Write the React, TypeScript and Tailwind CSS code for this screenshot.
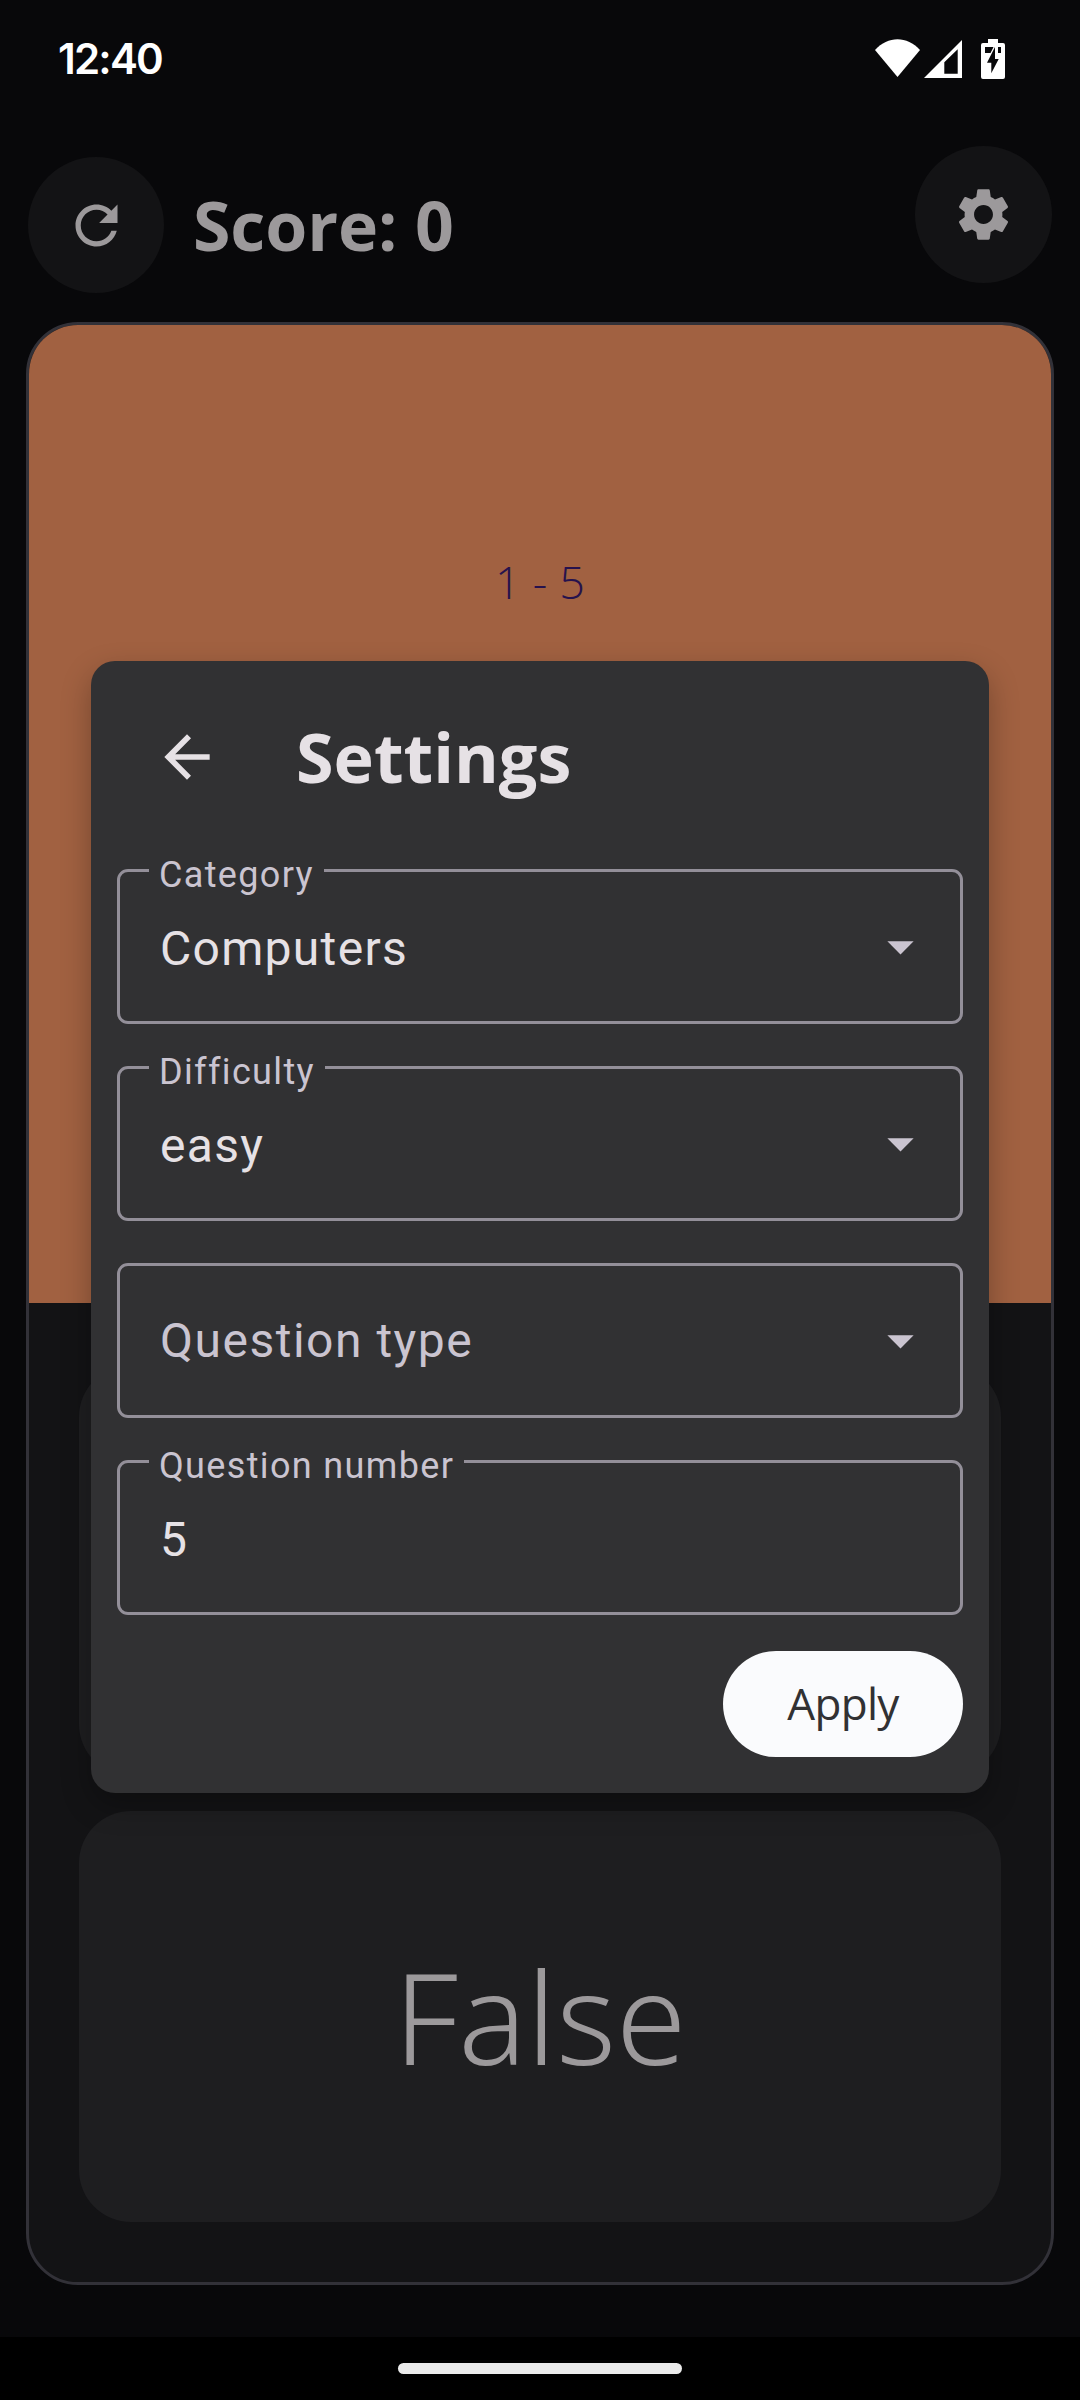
import React from "react";

type FieldProps = {
  label: string;
  value?: string;
  dropdown?: boolean;
};

function Caret() {
  return (
    <svg viewBox="0 0 24 24" className="size-[63px]" fill="#cac4d0">
      <path d="M7 10l5 5 5-5z" />
    </svg>
  );
}

function Field({ label, value, dropdown }: FieldProps) {
  return (
    <div className="relative flex h-[155px] items-center justify-between rounded-[11px] border-[3px] border-[#938f99] pr-[28px] pl-[40px] font-['Roboto',sans-serif]">
      {value ? (
        <>
          <span className="absolute top-[-22px] left-[29px] h-[40px] bg-[#313133] px-[10px] text-[36px] leading-[50px] tracking-[1.35px] whitespace-nowrap text-[#cac4d0]">
            {label}
          </span>
          <span className="pt-[4px] text-[48px] leading-[63px] tracking-[1.3px] text-[#e6e1e5]">{value}</span>
        </>
      ) : (
        <span className="text-[48px] leading-[63px] tracking-[1.5px] text-[#cac4d0]">{label}</span>
      )}
      {dropdown && <Caret />}
    </div>
  );
}

function StatusBar() {
  return (
    <div className="flex h-[118px] items-center justify-between pr-[75px] pl-[58px]">
      <span className="font-['Inter',sans-serif] text-[42px] leading-[50px] font-semibold tracking-[-1.8px] text-white">12:40</span>
      <svg viewBox="0 0 130 40" className="h-[40px] w-[130px]" fill="#fff">
        <path d="M0 11C13-3.300 32-3.300 45 11L22.500 38z" />
        <path fillRule="evenodd" d="M49 39L87 1V39zM69.300 23.300V34.700H82.700V10.300z" />
        <path
          fillRule="evenodd"
          d="M113 0h10v4h5a2 2 0 0 1 2 2v32a2 2 0 0 1-2 2h-20a2 2 0 0 1-2-2V6a2 2 0 0 1 2-2h5zM110 8v6h5.500l3-6zM120 8l-8 15.700h4.300v10.600l7.400-14.300H120zM123 8v6h3V8z"
        />
      </svg>
    </div>
  );
}

function SettingsDialog() {
  return (
    <section className="flex h-[1132px] w-[898px] flex-col rounded-[24px] bg-[#313133] px-[26px] shadow-[0_12px_30px_rgba(0,0,0,0.28)]">
      <header className="flex h-[208px] items-start pt-[62px] pl-[36px]">
        <svg viewBox="0 0 24 24" className="size-[68px]" fill="#e6e1e5">
          <path d="M20 11H7.830l5.590-5.590L12 4l-8 8 8 8 1.410-1.410L7.830 13H20v-2z" />
        </svg>
        <h2 className="ml-[75px] text-[68.25px] leading-[68px] font-bold text-[#e6e1e5]">Settings</h2>
      </header>
      <div className="flex flex-col gap-[42px]">
        <Field label="Category" value="Computers" dropdown />
        <Field label="Difficulty" value="easy" dropdown />
        <Field label="Question type" dropdown />
        <Field label="Question number" value="5" />
      </div>
      <button className="mt-[36px] h-[106px] w-[240px] self-end rounded-full bg-[#fafbfd] pb-[2px] text-[44px] tracking-[-0.7px] text-[#313133]">
        Apply
      </button>
    </section>
  );
}

export default function App() {
  return (
    <div className="relative flex h-[2400px] w-[1080px] flex-col overflow-hidden bg-[#08080a] font-['Open_Sans',sans-serif]">
      <StatusBar />
      <header className="flex h-[204px] items-start justify-between px-[28px] pt-[28px]">
        <div className="mt-[11px] flex items-center">
          <button className="flex size-[136px] items-center justify-center rounded-full bg-[#131315]">
            <svg viewBox="0 0 24 24" className="size-[63px]" fill="#9c999b">
              <path d="M17.650 6.350C16.200 4.900 14.210 4 12 4c-4.420 0-7.990 3.580-7.990 8s3.570 8 7.990 8c3.730 0 6.840-2.550 7.730-6h-2.080c-.82 2.330-3.040 4-5.650 4-3.310 0-6-2.690-6-6s2.690-6 6-6c1.660 0 3.140.69 4.220 1.780L13 11h7V4l-2.350 2.350z" />
            </svg>
          </button>
          <h1 className="ml-[29px] text-[68px] leading-[80px] font-bold tracking-[-0.1px] text-[#9c999b]">Score: 0</h1>
        </div>
        <button className="flex size-[137px] items-center justify-center rounded-full bg-[#131315]">
          <svg viewBox="0 0 24 24" className="size-[63px]" fill="#9c999b">
            <path d="M19.140 12.940c.04-.3.06-.61.06-.94 0-.32-.02-.64-.07-.94l2.030-1.580c.18-.14.23-.41.12-.61l-1.920-3.320c-.12-.22-.37-.29-.59-.22l-2.390.96c-.5-.38-1.030-.7-1.620-.94l-.36-2.540c-.04-.24-.24-.41-.48-.41h-3.840c-.24 0-.43.17-.47.41l-.36 2.540c-.59.24-1.130.57-1.620.94l-2.390-.96c-.22-.08-.47 0-.59.22L2.740 8.870c-.12.21-.08.47.12.61l2.030 1.580c-.05.3-.09.63-.09.94s.02.64.07.94l-2.030 1.580c-.18.14-.23.41-.12.61l1.920 3.320c.12.22.37.29.59.22l2.390-.96c.5.38 1.030.7 1.620.94l.36 2.540c.05.24.24.41.48.41h3.840c.24 0 .44-.17.47-.41l.36-2.540c.59-.24 1.130-.56 1.620-.94l2.390.96c.22.08.47 0 .59-.22l1.920-3.320c.12-.22.07-.47-.12-.61l-2.010-1.580zM12 15.600c-1.980 0-3.600-1.620-3.600-3.600s1.620-3.600 3.600-3.600 3.600 1.620 3.600 3.600-1.620 3.600-3.600 3.600z" />
          </svg>
        </button>
      </header>

      <main className="mx-[26px] flex h-[1963px] flex-col overflow-hidden rounded-[52px] border-[3px] border-[#323138] bg-[#131315]">
        <div className="flex h-[978px] shrink-0 justify-center bg-[#a16141] pt-[227px]">
          <p className="text-[45px] leading-[60px] font-light tracking-[0.2px] text-[#26124d]">1 - 5</p>
        </div>
        <div className="flex flex-col gap-[35px] px-[50px] pt-[62px]">
          <div className="h-[411px] rounded-[52px] bg-[#1e1e20]" />
          <div className="flex h-[411px] items-center justify-center rounded-[52px] bg-[#1e1e20] pb-[2px] font-['Noto_Sans'] text-[127.500px] leading-[160px] font-light text-[#9c999b]">
            False
          </div>
        </div>
      </main>

      <footer className="mt-auto flex h-[63px] items-start justify-center bg-black pt-[26px]">
        <div className="h-[11px] w-[284px] rounded-full bg-[#ebebeb]" />
      </footer>

      <div className="absolute inset-0 flex items-start justify-center pt-[661px]">
        <SettingsDialog />
      </div>
    </div>
  );
}
